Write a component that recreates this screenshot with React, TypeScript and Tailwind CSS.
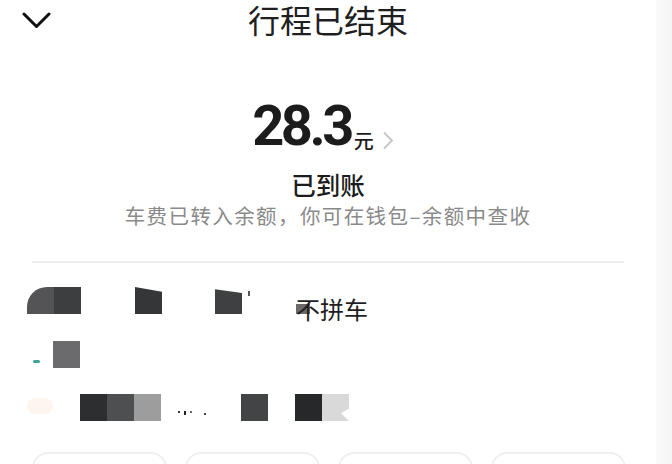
import React from "react";

const cjk = { fontFamily: '"Noto Sans CJK SC", "Noto Sans", sans-serif' };

function Sq({ c, className = "" }: { c: string; className?: string }) {
  return <div className={`w-[27px] h-[27px] shrink-0 ${c} ${className}`} />;
}

export default function App() {
  return (
    <div className="w-[672px] h-[464px] flex overflow-hidden bg-white" style={cjk}>
      <div className="w-[656px] h-full relative">
        {/* header */}
        <div className="h-[40px] flex items-start relative">
          <svg className="absolute left-[22px] top-[12px]" width="29" height="17" viewBox="0 0 29 17">
            <path d="M2 2 L14.5 14.5 L27 2" fill="none" stroke="#111" strokeWidth="3" strokeLinecap="round" strokeLinejoin="round" />
          </svg>
          <div className="w-full text-center text-[32px] leading-[38px] text-[#1f1f1f]">行程已结束</div>
        </div>

        {/* amount */}
        <div className="mt-[58px] pr-[10px] flex items-end justify-center h-[56px]">
          <span className="text-[56px] leading-[56px] font-bold tracking-[-3.5px] text-[#1c1c1c]" style={{ fontFamily: 'Roboto, "Liberation Sans", sans-serif' }}>
            28.3
          </span>
          <span className="ml-[3px] mb-[2px] text-[20px] leading-[22px] font-medium text-[#1c1c1c]">元</span>
          <svg className="ml-[8px] mb-[4px]" width="12" height="19" viewBox="0 0 12 19">
            <path d="M2 1.5 L10 9.5 L2 17.5" fill="none" stroke="#c6c6c6" strokeWidth="1.8" />
          </svg>
        </div>
        <div className="mt-[16px] text-center text-[24.5px] leading-[30px] font-medium text-[#1c1c1c]">已到账</div>
        <div className="mt-[2px] text-center text-[20.5px] leading-[26px] text-[#8a8a8a] tracking-[1.4px]">车费已转入余额，你可在钱包–余额中查收</div>

        {/* divider */}
        <div className="mt-[33px] mx-[32px] h-[2px] bg-[#ededed]" />

        {/* row 1 */}
        <div className="mt-[24px] flex items-start pl-[27px] h-[35px]">
          <Sq c="bg-[#545456] rounded-tl-[20px]" />
          <Sq c="bg-[#3d3e40]" />
          <div className="w-[54px]" />
          <Sq c="bg-[#353638] [clip-path:polygon(0_0,100%_18%,100%_100%,0_100%)]" />
          <div className="w-[53px]" />
          <Sq c="bg-[#3f4042] [clip-path:polygon(0_8%,100%_22%,100%_100%,0_100%)]" />
          <div className="w-[54px] relative">
            <div className="absolute left-[6px] top-[4px] w-[2px] h-[5px] bg-[#555]" />
          </div>
          <div className="w-[14px] h-[10px] mt-[17px] bg-[#6a6a6a]" />
          <div className="-ml-[14px] text-[24px] leading-[30px] mt-[7px] text-[#1f1f1f]">不拼车</div>
        </div>

        {/* row 2 */}
        <div className="mt-[19px] flex items-start pl-[33px] h-[27px]">
          <div className="w-[7px] h-[3px] mt-[19px] bg-[#3aa39a] rounded-full" />
          <div className="w-[13px]" />
          <Sq c="bg-[#6b6b6d]" />
        </div>

        {/* row 3 */}
        <div className="mt-[26px] flex items-start pl-[27px] h-[27px]">
          <div className="w-[26px] h-[16px] mt-[4px] bg-[#fdf6f0] rounded-full" />
          <div className="w-[27px]" />
          <Sq c="bg-[#2d2e30]" />
          <Sq c="bg-[#4e4f51]" />
          <Sq c="bg-[#9d9d9d]" />
          <div className="w-[80px] flex items-start gap-[4px] pl-[17px] pt-[17px]">
            <div className="w-[2px] h-[2px] bg-[#333]" />
            <div className="w-[2px] h-[4px] bg-[#222]" />
            <div className="w-[2px] h-[2px] bg-[#666]" />
            <div className="ml-[8px] mt-[2px] w-[2px] h-[2px] bg-[#444]" />
          </div>
          <Sq c="bg-[#434446]" />
          <div className="w-[27px]" />
          <Sq c="bg-[#27282a]" />
          <Sq c="bg-[#d9d9d9] [clip-path:polygon(0_0,100%_0,100%_55%,70%_70%,100%_100%,0_100%)]" />
        </div>

        {/* cards */}
        <div className="mt-[31px] ml-[32px] flex gap-[18px]">
          <div className="w-[135px] h-[60px] shrink-0 rounded-[16px] border-2 border-[#efefef]" />
          <div className="w-[135px] h-[60px] shrink-0 rounded-[16px] border-2 border-[#efefef]" />
          <div className="w-[135px] h-[60px] shrink-0 rounded-[16px] border-2 border-[#efefef]" />
          <div className="w-[135px] h-[60px] shrink-0 rounded-[16px] border-2 border-[#efefef]" />
        </div>
      </div>
      <div className="w-[16px] h-full bg-gradient-to-r from-[#fbfbfb] to-[#f5f5f5]" />
    </div>
  );
}
